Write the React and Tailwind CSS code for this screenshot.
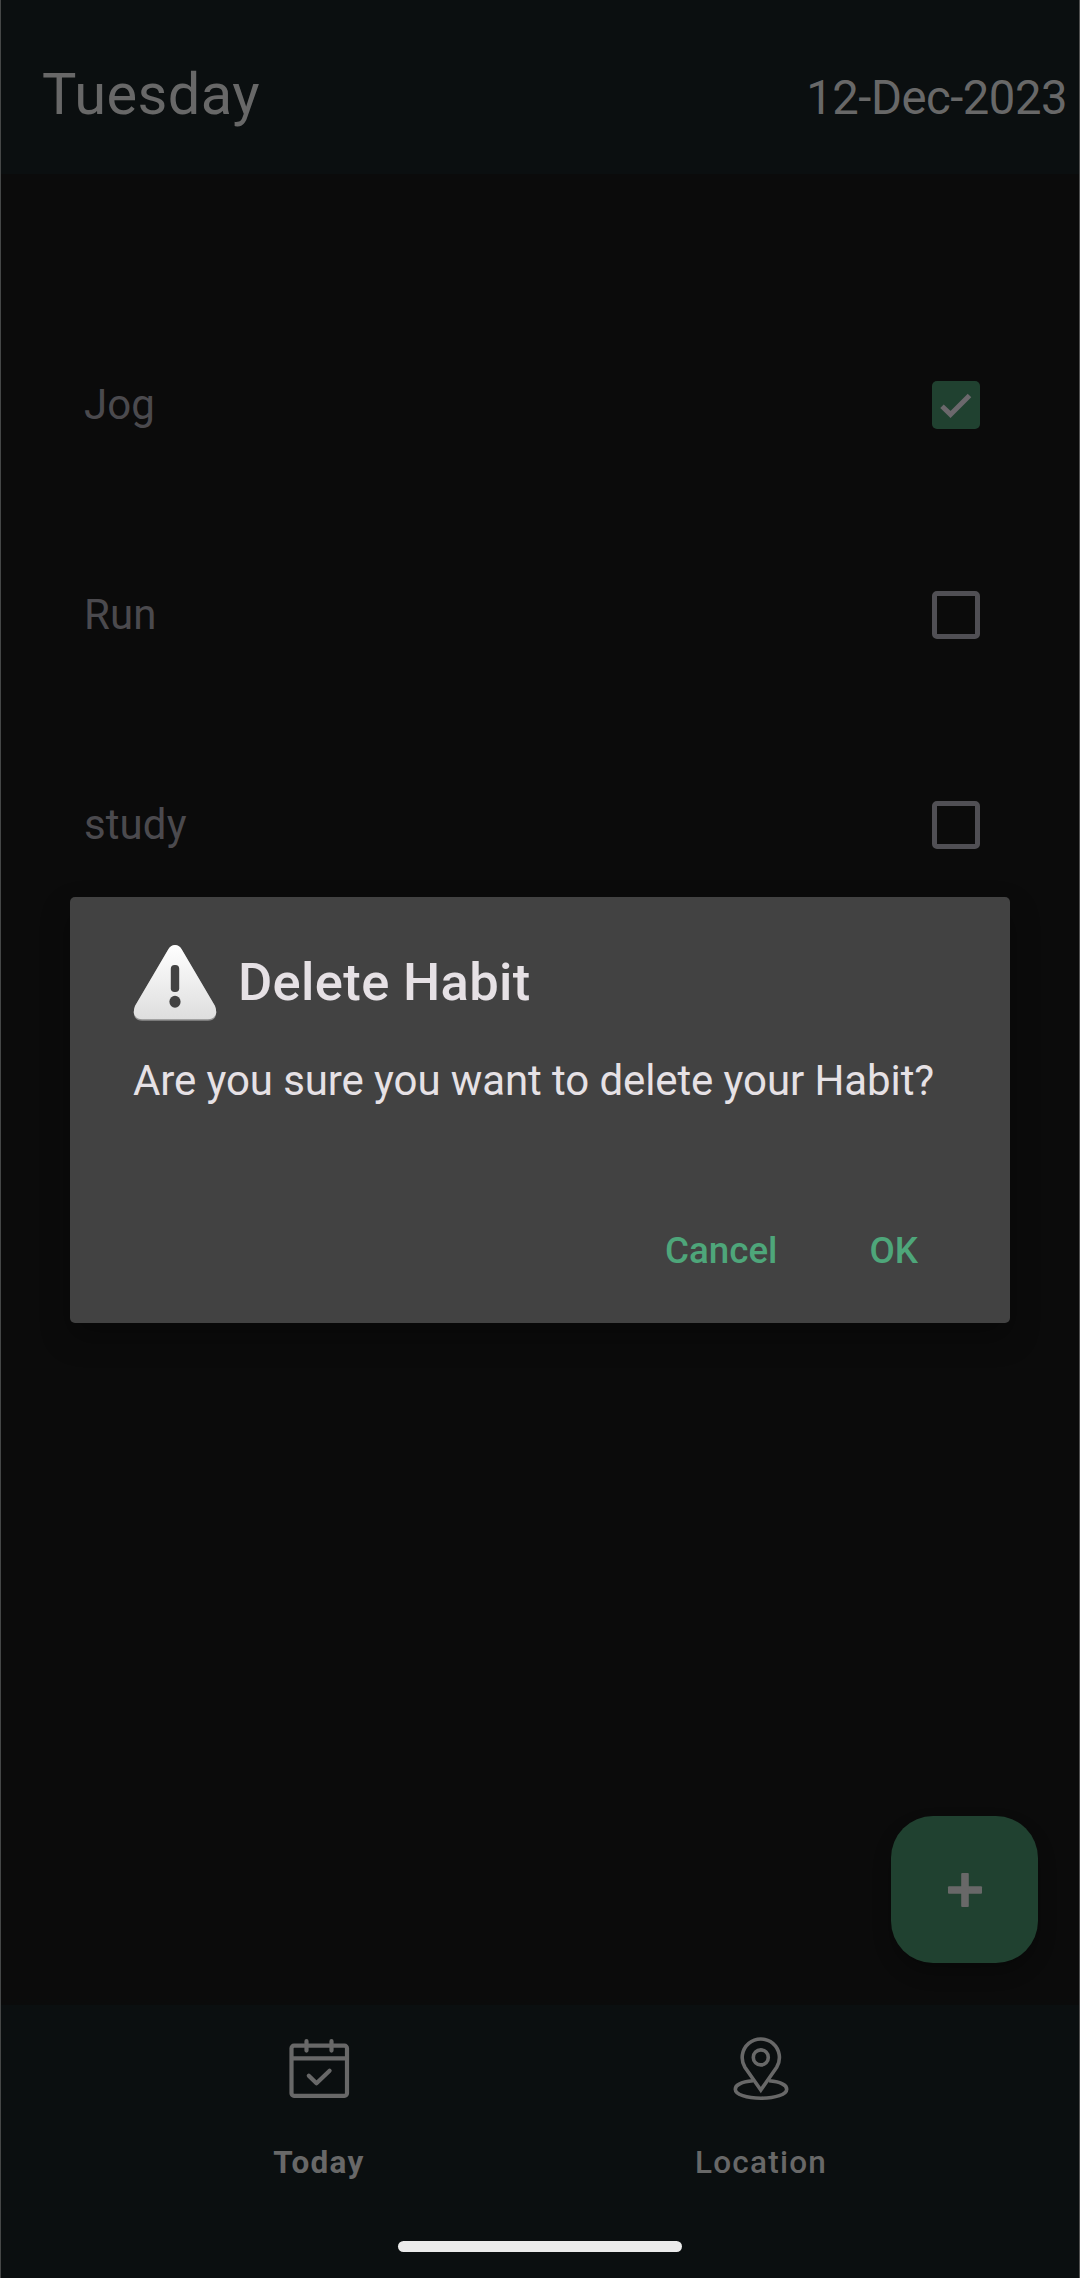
const habits = [
  { name: "Jog", done: true },
  { name: "Run", done: false },
  { name: "study", done: false },
];

function Checkbox({ checked }) {
  if (!checked) {
    return <span className="block size-12 rounded-[5px] border-[5px] border-[#504f54]" />;
  }
  return (
    <span className="block size-12 rounded-[5px] bg-[#204130]">
      <svg viewBox="0 0 48 48" className="size-12" fill="none" stroke="#6b686c" strokeWidth="5">
        <path d="M10 25.2 18.5 33.4 37.5 14.4" />
      </svg>
    </span>
  );
}

function CalendarIcon() {
  return (
    <svg viewBox="0 0 63 63" className="size-[63px]" fill="none" stroke="#686868" strokeWidth="4.2" strokeLinecap="round" strokeLinejoin="round">
      <rect x="3.5" y="8.7" width="55.5" height="50.1" rx="2.5" />
      <path d="M3.5 21.4H59" strokeLinecap="butt" />
      <path d="M18.5 4.200V13.600M43.5 4.200V13.600M20.800 38.700 28.500 46.300 41.600 33.800" />
    </svg>
  );
}

function LocationIcon() {
  return (
    <svg viewBox="0 0 63 63" className="size-[63px] overflow-visible" fill="none" stroke="#686868" strokeWidth="3.6">
      <circle cx="30.8" cy="20.4" r="7.5" />
      <path d="M30.8 53 L14.9 30.200A18.600 18.600 0 1 1 46.700 30.200Z" />
      <path d="M23 43.800C11.500 44.800 5.300 48 5.300 52.200C5.300 57.400 16.500 61.200 31 61.200S56.700 57.400 56.700 52.200C56.700 48 50.500 44.800 39 43.800" />
    </svg>
  );
}

function WarningIcon() {
  return (
    <svg viewBox="0 0 84 84" className="size-[84px]">
      <defs>
        <linearGradient id="warn" x1="0" y1="0" x2="0" y2="1">
          <stop offset="0" stopColor="#ffffff" />
          <stop offset="1" stopColor="#dedede" />
        </linearGradient>
      </defs>
      <path d="M35.5 9Q38 5 42 5T48.5 9L82 66Q84.500 73 82 77.500Q79.500 80.800 75 80.800H9Q4.500 80.800 2 77.500Q-0.500 73 2 66Z" fill="#8e8e8e" />
      <path d="M35.5 9Q38 5 42 5T48.5 9L82 66Q84.500 73 82 76Q79.500 79.200 75 79.200H9Q4.500 79.200 2 76Q-0.500 73 2 66Z" fill="url(#warn)" />
      <rect x="37.800" y="25" width="8.400" height="27" rx="3.8" fill="#424242" />
      <ellipse cx="42" cy="61.800" rx="5.600" ry="6" fill="#424242" />
    </svg>
  );
}

export default function App() {
  return (
    <div className="relative flex h-[2278px] w-[1080px] flex-col overflow-hidden border-x border-l-[#454747] border-r-[#505050] bg-[#0b0b0b] font-[Roboto,sans-serif] whitespace-nowrap">
      <header className="flex h-[174px] shrink-0 items-start justify-between bg-[#0b0f10] pr-[12px] pl-[41px] text-[#686868]">
        <h1 className="mt-[60px] text-[57.75px] leading-[68px] tracking-[0.45px]">Tuesday</h1>
        <p className="mt-[70px] text-[47.25px] leading-[56px] tracking-[-0.5px]">12-Dec-2023</p>
      </header>

      <main className="flex flex-1 flex-col justify-between">
        <ul className="pt-[126px]">
          {habits.map((h) => (
            <li key={h.name} className="flex h-[210px] items-center justify-between pr-[99px] pl-[83px] text-[42px] leading-[50px] tracking-[0.1px] text-[#4b4a4e]">
              <span>{h.name}</span>
              <Checkbox checked={h.done} />
            </li>
          ))}
        </ul>
        <button className="mr-[41px] mb-[42px] flex size-[147px] items-center justify-center self-end rounded-[42px] bg-[#204130] shadow-[0_10px_18px_0px_rgba(0,0,0,0.25)]">
          <svg viewBox="0 0 36 36" className="size-9" fill="#686868">
            <rect x="1" y="14.2" width="34" height="7.6" rx="1" />
            <rect x="14.2" y="1" width="7.6" height="34" rx="1" />
          </svg>
        </button>
      </main>

      <nav className="h-[273px] shrink-0 bg-[#0b0f10] text-[31.5px] leading-[38px] text-[#686868]">
        <div className="flex h-[231px] justify-center pt-[32px]">
          <div className="flex w-[442px] flex-col items-center">
            <CalendarIcon />
            <span className="mt-[44px] font-bold tracking-[1.3px]">Today</span>
          </div>
          <div className="flex w-[442px] flex-col items-center">
            <LocationIcon />
            <span className="mt-[44px] font-medium tracking-[1.25px]">Location</span>
          </div>
        </div>
        <div className="mx-auto mt-[5px] h-[11px] w-[284px] rounded-full bg-[#ebebeb]" />
      </nav>

      <section role="dialog" className="absolute top-[897px] left-[69px] flex h-[426px] w-[940px] flex-col rounded-[5px] bg-[#424242] px-[63px] pt-[43px] text-[#e6e1e5] shadow-[0_14px_30px_0px_rgba(0,0,0,0.3)]">
        <div className="flex items-center gap-[21px]">
          <WarningIcon />
          <h2 className="text-[52.5px] leading-[62px] font-medium tracking-[0.35px]">Delete Habit</h2>
        </div>
        <p className="mt-[32px] text-[42px] leading-[50px] tracking-[-0.1px]">Are you sure you want to delete your Habit?</p>
        <div className="mt-[124px] flex justify-end gap-[92px] pr-[29px] text-[36.75px] leading-[42px] font-medium text-[#4ea67a]">
          <button>Cancel</button>
          <button>OK</button>
        </div>
      </section>
    </div>
  );
}
